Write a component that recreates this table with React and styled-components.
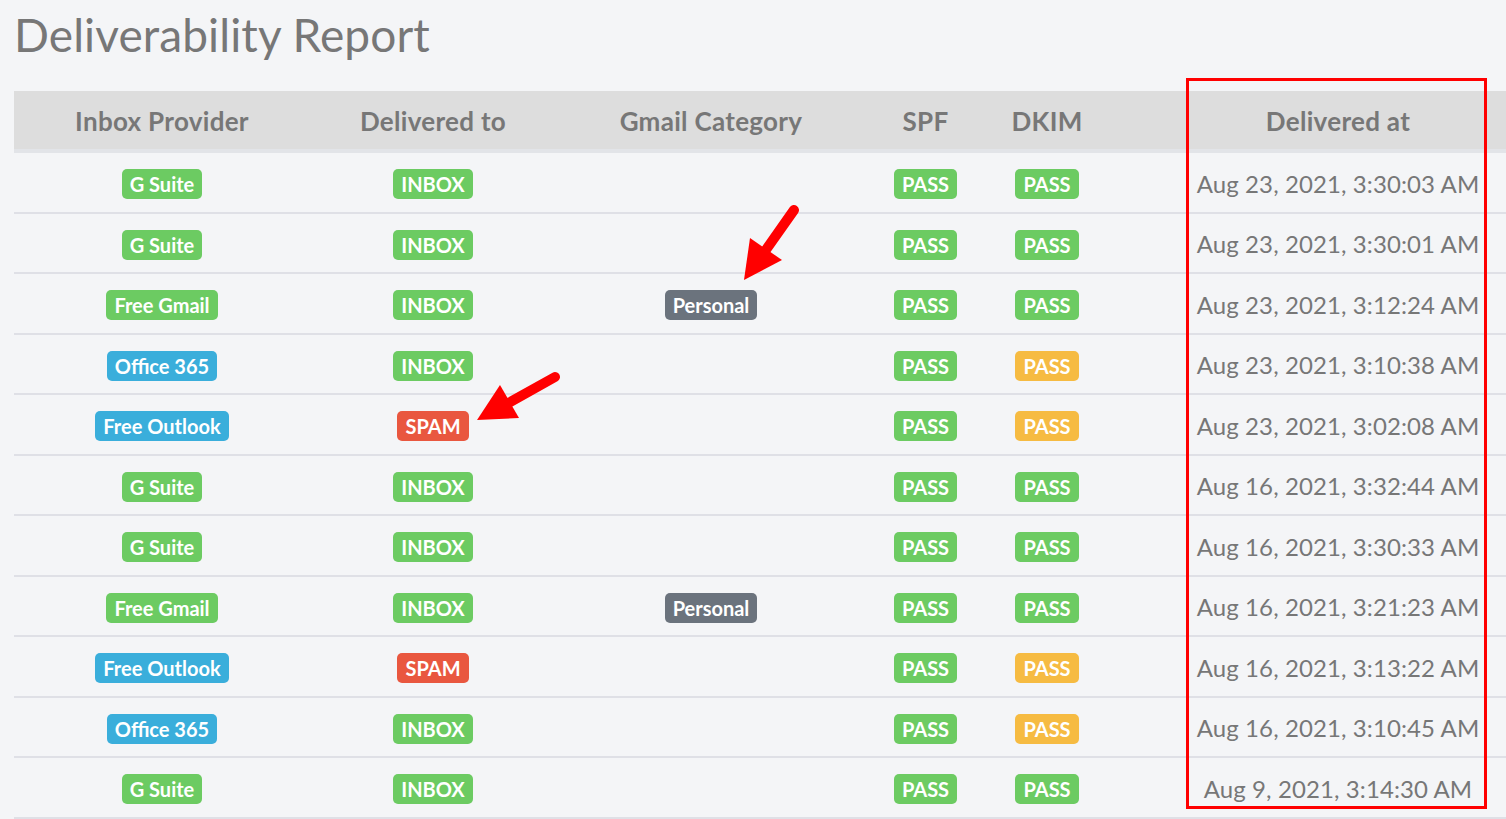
import React from "react";
import styled, { createGlobalStyle } from "styled-components";

const GlobalStyle = createGlobalStyle`
  html, body { margin: 0; padding: 0; }
  body {
    background: #f4f5f7;
    font-family: Lato, "Open Sans", sans-serif;
    overflow: hidden;
    width: 1506px;
    height: 819px;
  }
`;

const Page = styled.div`
  position: relative;
  width: 1506px;
  height: 819px;
  padding-left: 14px;
  box-sizing: border-box;
`;

const Title = styled.h1`
  margin: 0;
  height: 91px;
  padding: 7px 0 0 0;
  box-sizing: border-box;
  font-size: 46px;
  font-weight: 400;
  line-height: 56px;
  color: #777;
  letter-spacing: 0.1px;
`;

const COLS = "296px 246px 310px 119px 124px 458px";

const HeaderRow = styled.div`
  display: grid;
  grid-template-columns: ${COLS};
  height: 58px;
  background: #dddddd;
  border-bottom: 4px solid #e2e4e8;
`;

const HeaderCell = styled.div`
  display: flex;
  align-items: center;
  justify-content: center;
  font-size: 26px;
  font-weight: 700;
  color: #777;
  letter-spacing: 0.3px;
  padding-top: 2px;
`;

const Row = styled.div`
  display: grid;
  grid-template-columns: ${COLS};
  height: 58.5px;
  border-bottom: 2px solid #dfe0e6;
`;

const Cell = styled.div`
  display: flex;
  align-items: center;
  justify-content: center;
  padding-top: 4px;
`;

const DateText = styled.span`
  font-size: 24px;
  color: #777;
  letter-spacing: 0.1px;
  margin-top: -2px;
`;

const COLORS = {
  green: "#6ccb62",
  blue: "#3aaedb",
  red: "#e9573f",
  gray: "#6b737d",
  yellow: "#f6bb42",
};

const Badge = styled.span`
  display: inline-flex;
  align-items: center;
  height: 30px;
  padding: 0 8px;
  border-radius: 5px;
  background: ${(p) => COLORS[p.$tone]};
  color: #fff;
  font-size: 20px;
  font-weight: 700;
  line-height: 1;
`;

const Frame = styled.div`
  position: absolute;
  left: 1186px;
  top: 78px;
  width: 301px;
  height: 731px;
  border: 3px solid #ff0000;
  box-sizing: border-box;
  pointer-events: none;
`;

const ArrowSvg = styled.svg`
  position: absolute;
  left: 0;
  top: 0;
  pointer-events: none;
`;

const providerTone = {
  "G Suite": "green",
  "Free Gmail": "green",
  "Office 365": "blue",
  "Free Outlook": "blue",
};

const rows = [
  ["G Suite", "INBOX", "", "green", "Aug 23, 2021, 3:30:03 AM"],
  ["G Suite", "INBOX", "", "green", "Aug 23, 2021, 3:30:01 AM"],
  ["Free Gmail", "INBOX", "Personal", "green", "Aug 23, 2021, 3:12:24 AM"],
  ["Office 365", "INBOX", "", "yellow", "Aug 23, 2021, 3:10:38 AM"],
  ["Free Outlook", "SPAM", "", "yellow", "Aug 23, 2021, 3:02:08 AM"],
  ["G Suite", "INBOX", "", "green", "Aug 16, 2021, 3:32:44 AM"],
  ["G Suite", "INBOX", "", "green", "Aug 16, 2021, 3:30:33 AM"],
  ["Free Gmail", "INBOX", "Personal", "green", "Aug 16, 2021, 3:21:23 AM"],
  ["Free Outlook", "SPAM", "", "yellow", "Aug 16, 2021, 3:13:22 AM"],
  ["Office 365", "INBOX", "", "yellow", "Aug 16, 2021, 3:10:45 AM"],
  ["G Suite", "INBOX", "", "green", "Aug 9, 2021, 3:14:30 AM"],
];

const headers = ["Inbox Provider", "Delivered to", "Gmail Category", "SPF", "DKIM", "Delivered at"];

export default function App() {
  return (
    <>
      <GlobalStyle />
      <Page>
        <Title>Deliverability Report</Title>
        <HeaderRow>
          {headers.map((h) => (
            <HeaderCell key={h}>{h}</HeaderCell>
          ))}
        </HeaderRow>
        {rows.map((r, i) => (
          <Row key={i}>
            <Cell>
              <Badge $tone={providerTone[r[0]]}>{r[0]}</Badge>
            </Cell>
            <Cell>
              <Badge $tone={r[1] === "SPAM" ? "red" : "green"}>{r[1]}</Badge>
            </Cell>
            <Cell>{r[2] && <Badge $tone="gray">{r[2]}</Badge>}</Cell>
            <Cell>
              <Badge $tone="green">PASS</Badge>
            </Cell>
            <Cell>
              <Badge $tone={r[3]}>PASS</Badge>
            </Cell>
            <Cell>
              <DateText>{r[4]}</DateText>
            </Cell>
          </Row>
        ))}
        <Frame />
        <ArrowSvg width="1506" height="819" viewBox="0 0 1506 819">
          <line x1="794" y1="210" x2="763" y2="254" stroke="#ff0000" strokeWidth="10" strokeLinecap="round" />
          <polygon points="744,280 750,238 782,260" fill="#ff0000" />
          <line x1="555" y1="377" x2="505" y2="405" stroke="#ff0000" strokeWidth="10" strokeLinecap="round" />
          <polygon points="477,420 500,385 519,418" fill="#ff0000" />
        </ArrowSvg>
      </Page>
    </>
  );
}
